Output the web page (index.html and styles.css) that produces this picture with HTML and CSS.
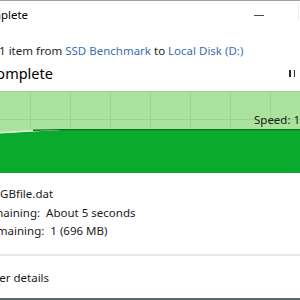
FILE: index.html
```html
<!DOCTYPE html>
<html lang="en">
<head>
    <meta charset="UTF-8">
    <title>32% complete</title>
    <meta name="viewport" content="width=device-width">
    <link rel="stylesheet" href="styles.css">
</head>
<body>

<div class="window">

  <div class="titlebar">
    <span class="title">32% complete</span>
    <div class="captions">
      <span class="cap"><span class="minimize"></span></span>
      <span class="cap"><span class="maximize"></span></span>
      <span class="cap"></span>
    </div>
  </div>

  <div class="content">
    <div class="from">Copying 1 item from <a href="#">SSD Benchmark</a> to <a href="#">Local Disk (D:)</a></div>

    <div class="status">
      <h1>32% complete</h1>
      <span class="btn pause"><i></i><i></i></span>
      <span class="btn cancel">&#x2715;</span>
    </div>

    <div class="chart">
      <svg width="380" height="82" viewBox="0 0 380 82">
        <rect x="0" y="0" width="380" height="82" fill="#abe39e"/>
        <line x1="0" y1="0.5" x2="380" y2="0.5" stroke="#97d18b"/>
        <line x1="0" y1="28.5" x2="380" y2="28.5" stroke="#9bd690"/>
        <g stroke="#9bd690">
          <line x1="38.5" y1="0" x2="38.5" y2="40"/>
          <line x1="78.5" y1="0" x2="78.5" y2="40"/>
          <line x1="118.5" y1="0" x2="118.5" y2="40"/>
          <line x1="158.5" y1="0" x2="158.5" y2="40"/>
          <line x1="198.5" y1="0" x2="198.5" y2="40"/>
          <line x1="238.5" y1="0" x2="238.5" y2="40"/>
          <line x1="278.5" y1="0" x2="278.5" y2="40"/>
          <line x1="318.5" y1="0" x2="318.5" y2="40"/>
          <line x1="358.5" y1="0" x2="358.5" y2="40"/>
        </g>
        <path d="M0 43 L48 42.4 C71 41.6 91 39.4 108 39 L380 39 L380 82 L0 82 Z" fill="#09aa2d"/>
        <path d="M0 42.4 L48 41.6 C71 40.6 91 38.8 108 38.6" fill="none" stroke="#e4f6df" stroke-width="1.3"/>
        <path d="M81 39.2 C93 38.8 101 38.6 108 38.6 L380 38.6" fill="none" stroke="#0b6f21" stroke-width="1.4"/>
      </svg>
      <span class="speed">Speed: 1.05 GB/s</span>
    </div>

    <div class="info">
      <div class="row"><span class="label">Name:</span><span class="value">1GBfile.dat</span></div>
      <div class="row"><span class="label">Time remaining:</span><span class="value">About 5 seconds</span></div>
      <div class="row"><span class="label">Items remaining:</span><span class="value">1 (696 MB)</span></div>
    </div>
  </div>

  <div class="footer">
    <svg class="chevron" width="16" height="16" viewBox="0 0 16 16">
      <circle cx="8" cy="8" r="7" fill="none" stroke="#555"/>
      <path d="M4.5 9.5 L8 6 L11.5 9.5" fill="none" stroke="#555" stroke-width="1.2"/>
    </svg>
    <span>Fewer details</span>
  </div>

</div>

</body>
</html>
```

FILE: styles.css
```css
html, body {margin: 0; padding: 0; background: #fff; overflow: hidden;}

body {font-family: "Noto Sans", "Open Sans", sans-serif;
      font-size: 11.5px;
      color: #1b1b1b;}

.window {width: 422px;
         height: 299px;
         margin-left: -48px;
         border-top: 1px solid #a0a0a0;
         display: flex;
         flex-direction: column;}

.titlebar {display: flex;
           height: 30px;}
.title {padding-top: 6px;
        line-height: 16px;
        color: #000;}
.captions {display: flex; margin-left: auto;}
.cap {width: 46px; height: 30px; position: relative;}
.minimize {display: block;
           width: 10px;
           height: 1px;
           background: #4a4a4a;
           margin: 14px 0 0 18px;}
.maximize {display: block;
           width: 1px;
           height: 18px;
           background: #ececec;
           margin: 2px 0 0 16px;}

.content {padding: 0 42px 0 0;}

.from {margin-top: 12px;
       line-height: 16px;}
.from a {color: #3a6fb0; text-decoration: none;}

.status {display: flex;
         align-items: center;
         margin-top: 4px;
         height: 20px;}
.status h1 {margin: 0;
            padding-left: 5px;
            font-size: 14.5px;
            font-weight: normal;
            line-height: 20px;
            color: #000;
            flex: 1;}
.btn {width: 20px;
      height: 20px;
      display: flex;
      align-items: center;
      justify-content: center;}
.pause {gap: 3px;}
.pause i {display: block;
          width: 1.5px;
          height: 7px;
          background: #2a2a2a;}
.cancel {margin-left: 10px; font-size: 10px;}

.chart {position: relative;
        margin-top: 8px;
        height: 82px;}
.chart svg {display: block;}
.speed {position: absolute;
        left: 302px;
        top: 21px;
        line-height: 16px;
        white-space: nowrap;
        color: #1a1a1a;}

.info {margin-top: 12px;
       padding-bottom: 13px;
       border-bottom: 2px solid #e8e8e8;}
.row {line-height: 18.5px; white-space: nowrap;}
.value {margin-left: 6px;}

.footer {flex: 1;
         display: flex;
         align-items: flex-start;
         gap: 10px;
         padding-top: 13px;
         line-height: 18.5px;
         border-bottom: 2px solid #5b6a6d;}
.chevron {margin-top: 1px;}
```
